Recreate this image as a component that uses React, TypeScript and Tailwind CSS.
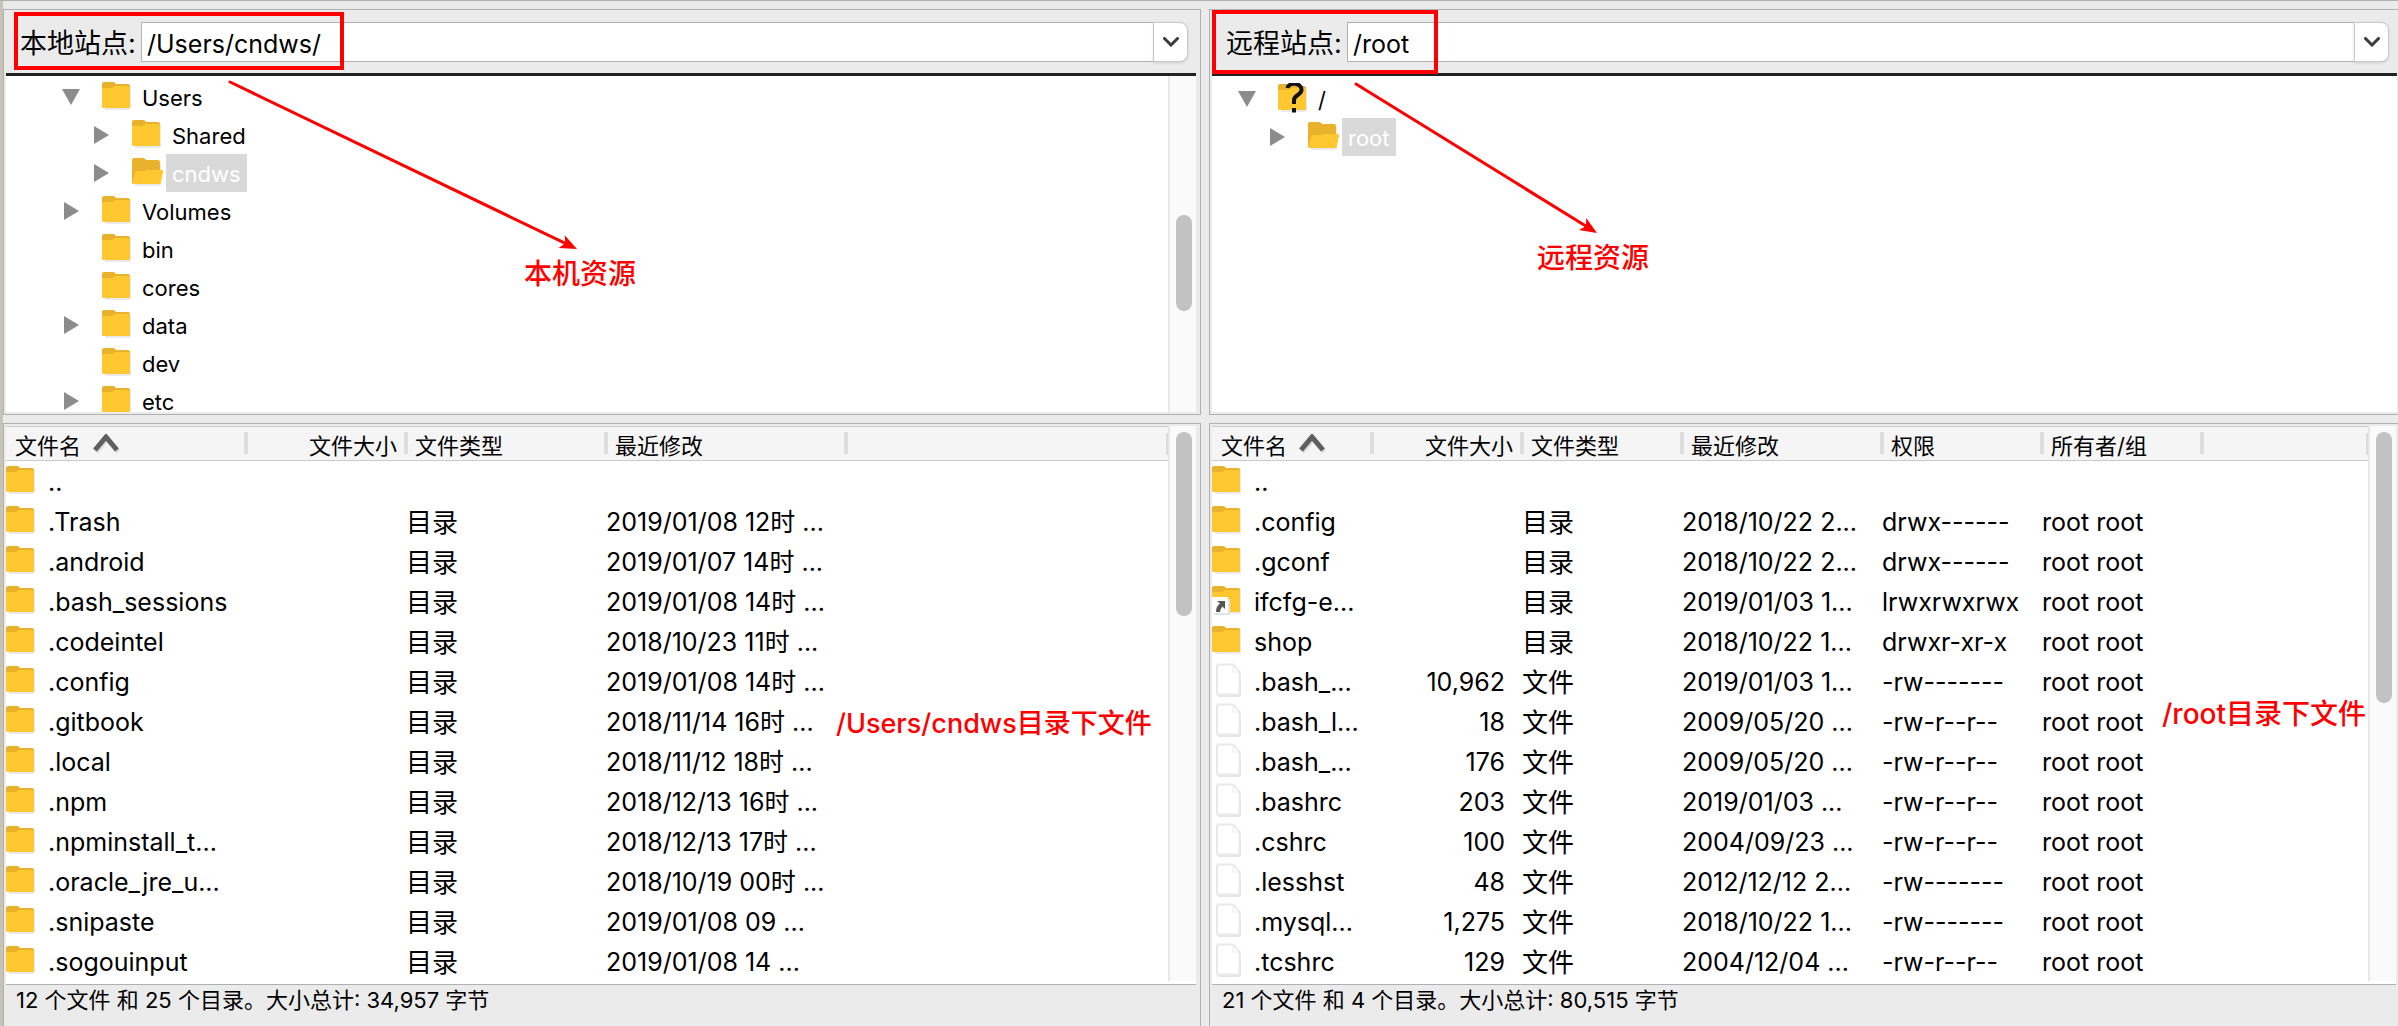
import type { ReactNode } from "react";

type Entry = { icon?: "folder" | "link" | "file"; cells: string[] };
type Column = { label: string; width: number; kind: "name" | "size" | "type" | "text" };
type Node = { name: string; level: number; arrow?: "down" | "right"; folder: "closed" | "open" | "unknown"; selected?: boolean };

const localTree: Node[] = [
  { name: "Users", level: 0, arrow: "down", folder: "closed" },
  { name: "Shared", level: 1, arrow: "right", folder: "closed" },
  { name: "cndws", level: 1, arrow: "right", folder: "open", selected: true },
  { name: "Volumes", level: 0, arrow: "right", folder: "closed" },
  { name: "bin", level: 0, folder: "closed" },
  { name: "cores", level: 0, folder: "closed" },
  { name: "data", level: 0, arrow: "right", folder: "closed" },
  { name: "dev", level: 0, folder: "closed" },
  { name: "etc", level: 0, arrow: "right", folder: "closed" },
];

const remoteTree: Node[] = [
  { name: "/", level: 0, arrow: "down", folder: "unknown" },
  { name: "root", level: 1, arrow: "right", folder: "open", selected: true },
];

const localColumns: Column[] = [
  { label: "文件名", width: 240, kind: "name" },
  { label: "文件大小", width: 160, kind: "size" },
  { label: "文件类型", width: 200, kind: "type" },
  { label: "最近修改", width: 240, kind: "text" },
];

const remoteColumns: Column[] = [
  { label: "文件名", width: 160, kind: "name" },
  { label: "文件大小", width: 150, kind: "size" },
  { label: "文件类型", width: 160, kind: "type" },
  { label: "最近修改", width: 200, kind: "text" },
  { label: "权限", width: 160, kind: "text" },
  { label: "所有者/组", width: 160, kind: "text" },
];

const dir = (name: string, date: string): Entry => ({ icon: "folder", cells: [name, "", "目录", date] });

const localFiles: Entry[] = [
  { icon: "folder", cells: ["..", "", "", ""] },
  dir(".Trash", "2019/01/08 12时 ..."),
  dir(".android", "2019/01/07 14时 ..."),
  dir(".bash_sessions", "2019/01/08 14时 ..."),
  dir(".codeintel", "2018/10/23 11时 ..."),
  dir(".config", "2019/01/08 14时 ..."),
  dir(".gitbook", "2018/11/14 16时 ..."),
  dir(".local", "2018/11/12 18时 ..."),
  dir(".npm", "2018/12/13 16时 ..."),
  dir(".npminstall_t...", "2018/12/13 17时 ..."),
  dir(".oracle_jre_u...", "2018/10/19 00时 ..."),
  dir(".snipaste", "2019/01/08 09 ..."),
  dir(".sogouinput", "2019/01/08 14 ..."),
];

const remoteFiles: Entry[] = [
  { icon: "folder", cells: ["..", "", "", "", "", ""] },
  { icon: "folder", cells: [".config", "", "目录", "2018/10/22 2...", "drwx------", "root root"] },
  { icon: "folder", cells: [".gconf", "", "目录", "2018/10/22 2...", "drwx------", "root root"] },
  { icon: "link", cells: ["ifcfg-e...", "", "目录", "2019/01/03 1...", "lrwxrwxrwx", "root root"] },
  { icon: "folder", cells: ["shop", "", "目录", "2018/10/22 1...", "drwxr-xr-x", "root root"] },
  { icon: "file", cells: [".bash_...", "10,962", "文件", "2019/01/03 1...", "-rw-------", "root root"] },
  { icon: "file", cells: [".bash_l...", "18", "文件", "2009/05/20 ...", "-rw-r--r--", "root root"] },
  { icon: "file", cells: [".bash_...", "176", "文件", "2009/05/20 ...", "-rw-r--r--", "root root"] },
  { icon: "file", cells: [".bashrc", "203", "文件", "2019/01/03 ...", "-rw-r--r--", "root root"] },
  { icon: "file", cells: [".cshrc", "100", "文件", "2004/09/23 ...", "-rw-r--r--", "root root"] },
  { icon: "file", cells: [".lesshst", "48", "文件", "2012/12/12 2...", "-rw-------", "root root"] },
  { icon: "file", cells: [".mysql...", "1,275", "文件", "2018/10/22 1...", "-rw-------", "root root"] },
  { icon: "file", cells: [".tcshrc", "129", "文件", "2004/12/04 ...", "-rw-r--r--", "root root"] },
];

function FolderIcon({ state = "closed" }: { state?: "closed" | "open" | "unknown" | "link" }) {
  return (
    <svg width="32" height="32" viewBox="0 0 32 32" className="shrink-0" aria-hidden="true">
      <path d="M2 5h25a2 2 0 0 1 2 2v20a2 2 0 0 1-2 2H3z" fill="#e9e9e9" />
      <path d="M0 3q0-2 2-2h9q2 0 3 2h12q2 0 2 2v20q0 2-2 2H2q-2 0-2-2z" fill="#e9b22c" />
      {state === "open" ? (
        <path d="M5 14h7l3-1h15q1.500 0 1 2l-2 10q0 2-2 2H2q-2 0-1.500-2L3 16q0-2 2-2z" fill="#ffc730" />
      ) : (
        <path d="M0 7h9q2 0 4-2h13q2 0 2 2v18q0 2-2 2H2q-2 0-2-2z" fill="#ffc730" />
      )}
      {state === "unknown" && (
        <g fill="none" stroke="#111" strokeWidth="4">
          <path d="M9.500 5c1-6 14-6 14 2 0 5-7.500 5-7.500 10v4" />
          <path d="M16 25v4.500" />
        </g>
      )}
      {state === "link" && (
        <g>
          <path d="M2 14h16v16H2z" fill="#e4e4e4" />
          <path d="M0 12h16v16H0z" fill="#fff" />
          <path d="M5 16h8v8l-2.500-2.500Q8 24 8 27H4q0-6 4-8.500z" fill="#555" />
        </g>
      )}
    </svg>
  );
}

function FileIcon() {
  return (
    <svg width="32" height="36" viewBox="0 0 32 36" className="shrink-0" aria-hidden="true">
      <path d="M5 4q0-1 1-1h16l7 7v22q0 2-2 2H7q-2 0-2-2z" fill="#e6e6e6" />
      <path d="M5 3q0-1.500 1.500-1.500H21l6.500 7V30q0 1.500-1.500 1.500H6.500Q5 31.500 5 30z" fill="#fff" stroke="#e9e9e9" strokeWidth="2" />
      <path d="M21 2v7h6" fill="none" stroke="#e9e9e9" strokeWidth="1" />
    </svg>
  );
}

function EntryIcon({ icon }: { icon: Entry["icon"] }) {
  if (icon === "file") return <FileIcon />;
  return <FolderIcon state={icon === "link" ? "link" : "closed"} />;
}

function PathBar({ id, label, path, mark }: { id: string; label: string; path: string; mark: string }) {
  return (
    <div className="relative flex h-[63px] items-center pr-2 pl-[14px] text-[27px]">
      <label htmlFor={id} className="w-[121px] shrink-0 pt-[6px] whitespace-nowrap">
        {label}
      </label>
      <div className="flex h-10 min-w-0 flex-1">
        <input id={id} defaultValue={path} className="min-w-0 flex-1 border border-r-0 border-[#b1b1b1] bg-white px-[5px] pt-[6px] text-[25px] outline-none" />
        <button aria-label={`${label} ▾`} className="flex w-[35px] items-center justify-center rounded-r-lg border border-[#c8c8c8] bg-white shadow-sm">
          <svg width="16" height="10" viewBox="0 0 16 10" fill="none" stroke="#3c3c3c" strokeWidth="3" aria-hidden="true">
            <path d="M1.500 1.500 8 8l6.500-6.500" strokeLinecap="round" />
          </svg>
        </button>
      </div>
      <div className={`pointer-events-none absolute border-4 border-[#f00] ${mark}`} />
    </div>
  );
}

function TreeRow({ node }: { node: Node }) {
  return (
    <li className="flex h-[38px] items-center leading-7">
      {node.level === 1 && <span className="w-[30px] shrink-0" />}
      <span className="flex w-10 shrink-0">
        {node.arrow && (
          <button aria-label={node.name} className="flex h-6 w-[18px] items-center justify-center">
            {node.arrow === "down" ? (
              <svg width="18" height="16" viewBox="0 0 18 16" className="shrink-0" aria-hidden="true">
                <path d="M0 0h18L9 16z" fill="#8c8c8c" />
              </svg>
            ) : (
              <svg width="16" height="18" viewBox="0 0 16 18" className="shrink-0" aria-hidden="true">
                <path d="M1 0v18l15-9z" fill="#8c8c8c" />
              </svg>
            )}
          </button>
        )}
      </span>
      <FolderIcon state={node.folder} />
      <span className={node.selected ? "ml-[2px] flex h-full items-center bg-[#d9d9d9] px-[6px] pt-[2px] text-white" : "ml-2 pt-[2px]"}>{node.name}</span>
    </li>
  );
}

function ScrollBar({ thumb }: { thumb: string }) {
  return (
    <div className="w-7 shrink-0 border-l-2 border-[#e8e8e8] bg-[#fafafa] px-[6px]">
      <div className={`w-4 rounded-full bg-[#c2c2c2] ${thumb}`} />
    </div>
  );
}

const cellStyle = {
  name: "p-0",
  size: "p-0 pt-[2px] pr-[17px] text-right",
  type: "p-0 pt-1 text-[26px]",
  text: "p-0 pt-[2px]",
};

function FileTable({ columns, files }: { columns: Column[]; files: Entry[] }) {
  return (
    <table className="w-full table-fixed border-collapse text-left whitespace-nowrap">
      <colgroup>
        {columns.map((c) => (
          <col key={c.label} style={{ width: c.width }} />
        ))}
        <col />
      </colgroup>
      <thead>
        <tr className="h-[34px] border-y border-[#cacaca] bg-[#f5f5f5] text-[22px] leading-7">
          {columns.map((c) => (
            <th key={c.label} className={c.kind === "size" ? "relative p-0 pt-1 pr-[9px] text-right font-normal" : "relative p-0 pt-1 pl-[9px] font-normal"}>
              {c.kind === "name" ? (
                <button className="flex items-center gap-3">
                  {c.label}
                  <svg width="28" height="24" viewBox="0 0 28 24" fill="none" strokeWidth="5" aria-hidden="true">
                    <path d="M3 18 14 5l11 13" stroke="#dcdcdc" />
                    <path d="M2 16 13 3l11 13" stroke="#5f5f5f" />
                  </svg>
                </button>
              ) : (
                c.label
              )}
              <span className="absolute top-[5px] -right-[2px] h-[22px] w-1 bg-[#dcdcdc]" />
            </th>
          ))}
          <th className="p-0">
            <span className="ml-auto block h-[22px] w-[2px] bg-[#dcdcdc]" />
          </th>
        </tr>
      </thead>
      <tbody className="text-[25px] leading-9">
        {files.map((f, i) => (
          <tr key={i} className="h-10">
            {columns.map((c, j) => (
              <td key={c.label} className={cellStyle[c.kind]}>
                {c.kind === "name" ? (
                  <span className="flex h-10 items-center gap-[10px] overflow-hidden">
                    <EntryIcon icon={f.icon} />
                    <span className="pt-[2px]">{f.cells[j]}</span>
                  </span>
                ) : (
                  f.cells[j]
                )}
              </td>
            ))}
            <td className="p-0" />
          </tr>
        ))}
      </tbody>
    </table>
  );
}

function Pane({ children, className }: { children: ReactNode; className: string }) {
  return <section className={`flex min-w-0 flex-col border border-[#b0b0b0] ${className}`}>{children}</section>;
}

function Arrow({ width, height, className }: { width: number; height: number; className: string }) {
  const angle = (Math.atan2(height, width) * 180) / Math.PI;
  return (
    <svg width={width} height={height} className={`pointer-events-none absolute overflow-visible ${className}`} aria-hidden="true">
      <path d={`M0 0 ${width - 10} ${height - (10 * height) / width}`} stroke="#f00" strokeWidth="3" strokeLinecap="round" />
      <path d="M0 0-17-7-13 0-17 7z" fill="#f00" transform={`translate(${width} ${height}) rotate(${angle})`} />
    </svg>
  );
}

const note = "pointer-events-none absolute leading-8 font-medium whitespace-nowrap text-[#f00]";

export default function App() {
  return (
    <main className="flex min-h-screen flex-col overflow-hidden border-t border-[#b0b0b0] bg-[#ebebeb] font-['Inter','Noto_Sans_CJK_SC',sans-serif] text-black">
      <div className="grid flex-1 grid-cols-[1198fr_1189fr] gap-x-2 border-l-3 border-[#c9c3b6] pt-2">
        <div className="flex min-w-0 flex-col gap-2">
          <Pane className="relative h-[406px] pr-1 pb-[2px] pl-[2px]">
            <PathBar id="local-path" label="本地站点:" path="/Users/cndws/" mark="top-[2px] left-2 h-[58px] w-[330px]" />
            <div className="flex min-h-0 flex-1 border-t-3 border-[#222] bg-white">
              <ul className="min-w-0 flex-1 overflow-hidden pt-[2px] pl-[56px] text-[22px]">
                {localTree.map((n) => (
                  <TreeRow key={n.name} node={n} />
                ))}
              </ul>
              <ScrollBar thumb="mt-[139px] h-24" />
            </div>
            <Arrow width={347} height={167} className="top-[72px] left-[226px]" />
            <p className={`${note} top-[248px] left-[520px] text-[28px]`}>本机资源</p>
          </Pane>
          <Pane className="relative flex-1 border-b-0 pt-[2px] pr-1 pl-[2px]">
            <div className="flex bg-white pb-[3px]">
              <div className="min-w-0 flex-1">
                <FileTable columns={localColumns} files={localFiles} />
              </div>
              <ScrollBar thumb="mt-[6px] h-[184px]" />
            </div>
            <p className="flex-1 border-t border-[#b0b0b0] pl-[10px] text-[22px] leading-[30px]">12 个文件 和 25 个目录。大小总计: 34,957 字节</p>
            <p className={`${note} top-[284px] left-[832px] text-[27px]`}>/Users/cndws目录下文件</p>
          </Pane>
        </div>
        <div className="flex min-w-0 flex-col gap-2">
          <Pane className="relative h-[406px] border-r-0 pr-[1px] pb-[2px] pl-[2px]">
            <PathBar id="remote-path" label="远程站点:" path="/root" mark="top-0 left-0 h-[64px] w-[226px]" />
            <div className="flex min-h-0 flex-1 border-t-3 border-[#222] bg-white">
              <ul className="min-w-0 flex-1 overflow-hidden pt-1 pl-[26px] text-[22px]">
                {remoteTree.map((n) => (
                  <TreeRow key={n.name} node={n} />
                ))}
              </ul>
            </div>
            <Arrow width={241} height={149} className="top-[74px] left-[146px]" />
            <p className={`${note} top-[232px] left-[327px] text-[28px]`}>远程资源</p>
          </Pane>
          <Pane className="relative flex-1 border-r-0 border-b-0 pt-[2px] pr-[2px] pl-[2px]">
            <div className="flex bg-white pb-[3px]">
              <div className="min-w-0 flex-1">
                <FileTable columns={remoteColumns} files={remoteFiles} />
              </div>
              <ScrollBar thumb="mt-[6px] h-[271px]" />
            </div>
            <p className="flex-1 border-t border-[#b0b0b0] pl-[10px] text-[22px] leading-[30px]">21 个文件 和 4 个目录。大小总计: 80,515 字节</p>
            <p className={`${note} top-[274px] left-[952px] text-[28px]`}>/root目录下文件</p>
          </Pane>
        </div>
      </div>
    </main>
  );
}
